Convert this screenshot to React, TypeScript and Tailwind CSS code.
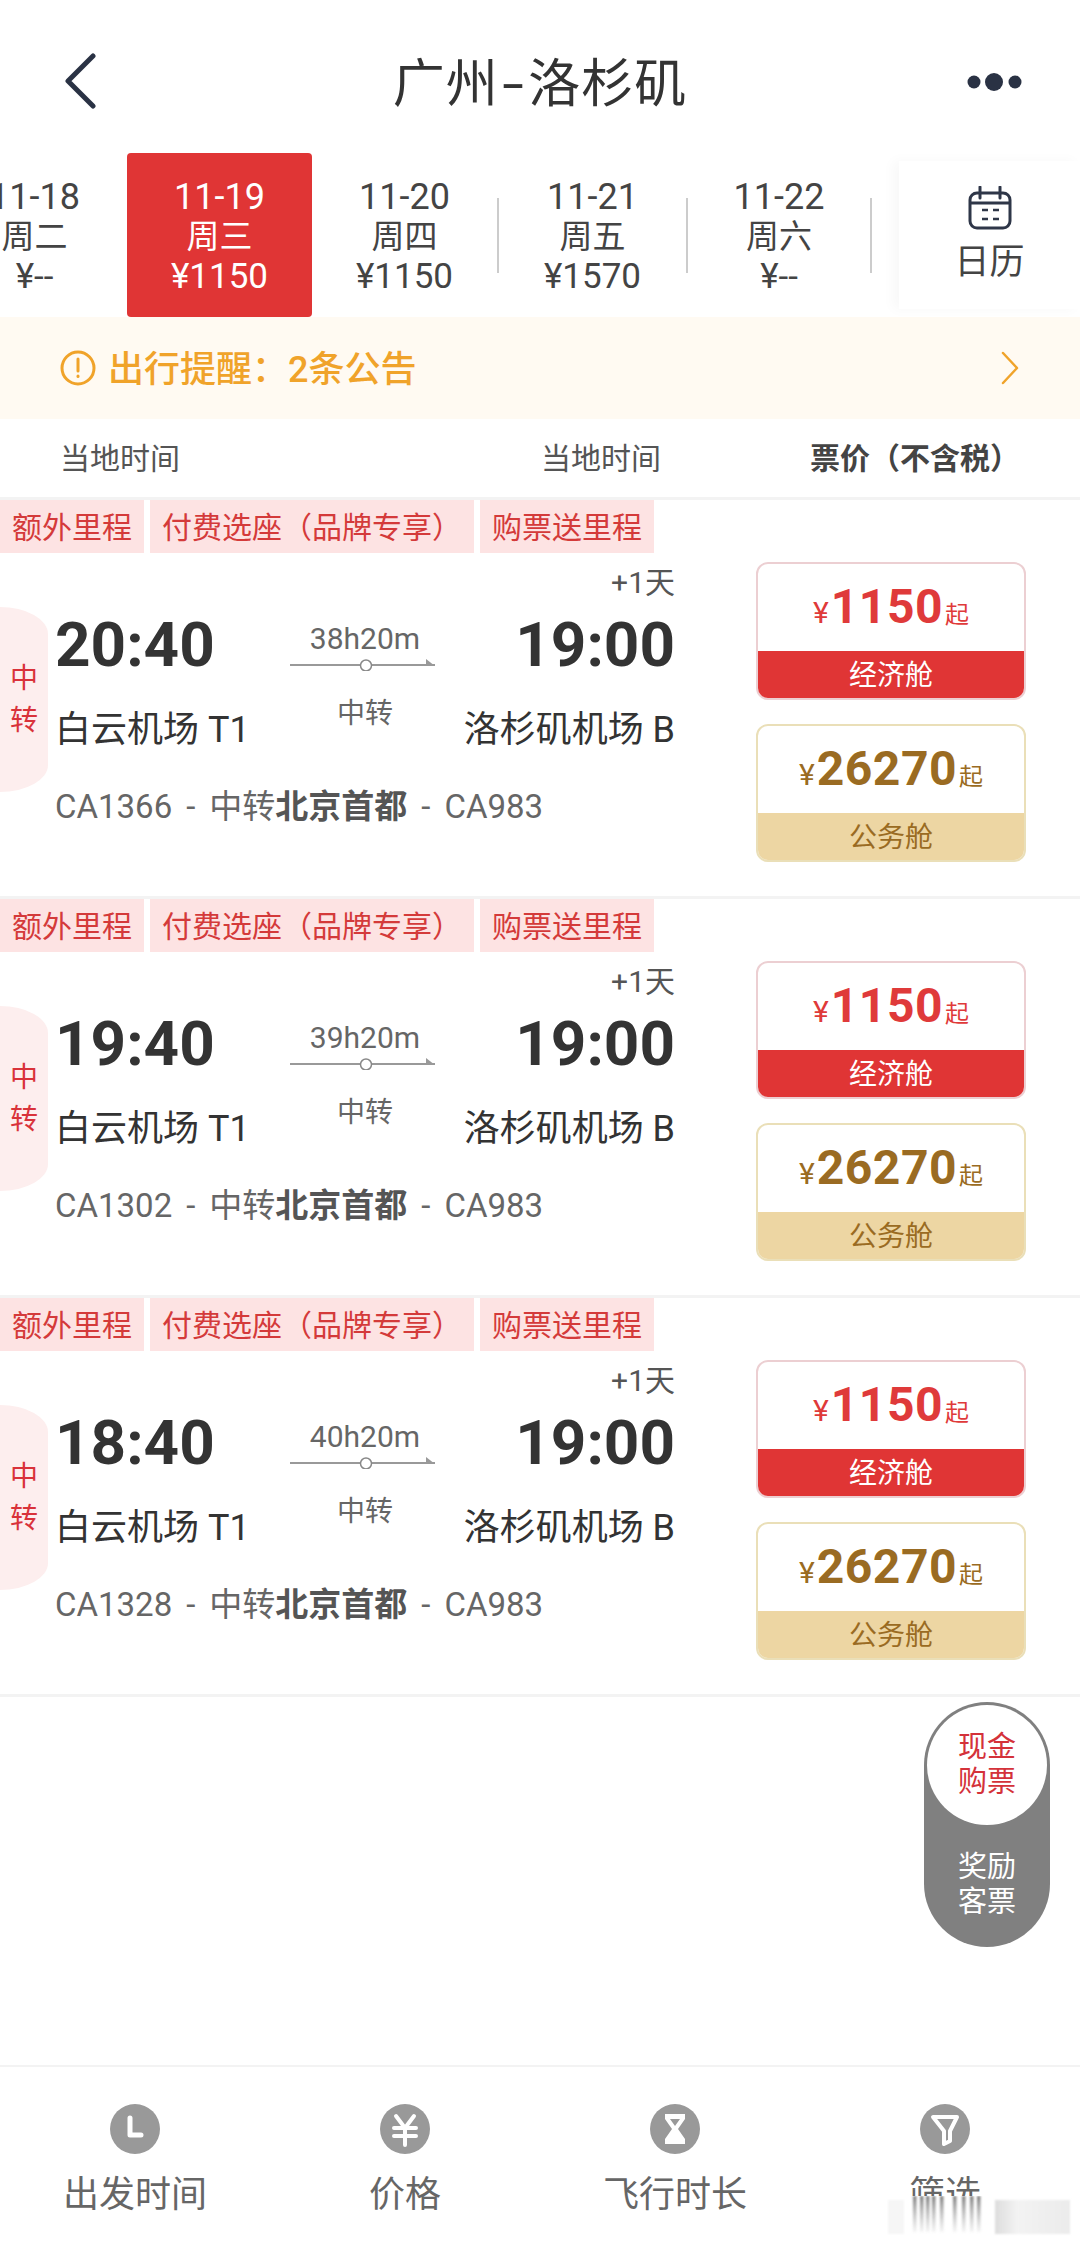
import React from "react";

const dates = [
  { d: "11-18", w: "周二", p: "¥--", cls: "w-[185px]" },
  { d: "11-19", w: "周三", p: "¥1150", cls: "w-[185px] bg-[#e03535] text-white rounded-[4px]" },
  { d: "11-20", w: "周四", p: "¥1150", cls: "w-[185px]", sep: true },
  { d: "11-21", w: "周五", p: "¥1570", cls: "w-[187px]", sep: true },
  { d: "11-22", w: "周六", p: "¥--", cls: "w-[182px]", sep: true },
];

const flights = [
  { dep: "20:40", dur: "38h20m", no: "CA1366" },
  { dep: "19:40", dur: "39h20m", no: "CA1302" },
  { dep: "18:40", dur: "40h20m", no: "CA1328" },
];

function Tag({ children, cls }: { children: React.ReactNode; cls: string }) {
  return (
    <div className={`h-[53px] bg-[#fde3e3] text-[#d43a3a] text-[30px] leading-[55px] whitespace-nowrap ${cls}`}>
      {children}
    </div>
  );
}

function PriceBox({ price, label, gold }: { price: string; label: string; gold?: boolean }) {
  const c = gold ? "text-[#9a6b22]" : "text-[#df3a3a]";
  return (
    <div className={`w-[270px] h-[138px] rounded-[12px] overflow-hidden border-2 flex flex-col ${gold ? "border-[#eadfb8]" : "border-[#eccfd2]"}`}>
      <div className={`flex-1 flex items-baseline justify-center pt-[16px] ${c}`}>
        <span className="text-[30px] leading-[54px] mr-[2px]">¥</span>
        <span className="text-[48px] leading-[54px] font-bold tracking-[0.5px]">{price}</span>
        <span className="text-[24px] leading-[54px] ml-[2px]">起</span>
      </div>
      <div className={`h-[49px] -mx-[2px] -mb-[2px] text-center text-[28px] leading-[49px] ${gold ? "bg-[#edd6a3] text-[#9a6b22]" : "bg-[#e03535] text-white"}`}>
        {label}
      </div>
    </div>
  );
}

function FlightCard({ dep, dur, no }: { dep: string; dur: string; no: string }) {
  return (
    <div className="h-[399px] border-b-[3px] border-[#f3f3f3]">
      <div className="flex gap-[6px]">
        <Tag cls="w-[144px] pl-[12px]">额外里程</Tag>
        <Tag cls="w-[324px] pl-[12px]">付费选座（品牌专享）</Tag>
        <Tag cls="w-[174px] pl-[12px]">购票送里程</Tag>
      </div>
      <div className="flex">
        <div className="w-[48px] h-[185px] mt-[54px] bg-[#fdeeee] rounded-tr-[48px_27px] rounded-br-[48px_27px] text-[#d9323a] text-[28px] leading-[42px] flex flex-col items-center justify-center">
          <span>中</span>
          <span>转</span>
        </div>
        <div className="w-[620px] ml-[7px] flex flex-col">
          <div className="mt-[15px] h-[30px] text-right text-[30px] leading-[30px] text-[#555]">+1天</div>
          <div className="flex text-[#333]">
            <div className="flex-1 basis-0 mt-[15px] flex flex-col items-start">
              <div className="h-[64px] text-[62px] leading-[64px] font-bold">{dep}</div>
              <div className="mt-[31px] h-[44px] text-[36px] leading-[44px] whitespace-nowrap">白云机场 T1</div>
            </div>
            <div className="w-[145px] flex flex-col items-center text-[#666]">
              <div className="h-[36px] mt-[23px] text-[30px] leading-[36px]">{dur}</div>
              <svg className="mt-[2px] mr-[6px] block" width="145" height="12" viewBox="0 0 145 12">
                <line x1="0" y1="6" x2="145" y2="6" stroke="#999" strokeWidth="2" />
                <path d="M136 0 L145 7 L136 7 Z" fill="#999" />
                <circle cx="76" cy="6.5" r="5.5" fill="#fff" stroke="#888" strokeWidth="1.5" />
              </svg>
              <div className="h-[36px] mt-[25px] text-[28px] leading-[36px]">中转</div>
            </div>
            <div className="flex-1 basis-0 mt-[15px] flex flex-col items-end">
              <div className="h-[64px] text-[62px] leading-[64px] font-bold">19:00</div>
              <div className="mt-[31px] h-[44px] text-[36px] leading-[44px] whitespace-nowrap">洛杉矶机场 B</div>
            </div>
          </div>
          <div className="mt-[35px] text-[33px] leading-[40px] text-[#666] whitespace-nowrap">
            <span>{no}</span>
            <span className="mx-[14px]">-</span>
            <span>中转</span>
            <span className="font-bold text-[#555]">北京首都</span>
            <span className="mx-[14px]">-</span>
            <span>CA983</span>
          </div>
        </div>
        <div className="ml-[81px] mt-[9px] flex flex-col gap-[24px]">
          <PriceBox price="1150" label="经济舱" />
          <PriceBox price="26270" label="公务舱" gold />
        </div>
      </div>
    </div>
  );
}

function BottomItem({ label, icon }: { label: string; icon: React.ReactNode }) {
  return (
    <div className="w-[270px] flex flex-col items-center">
      <svg width="50" height="50" viewBox="0 0 50 50" className="block mt-[37px]">
        <circle cx="25" cy="25" r="25" fill="#999" />
        {icon}
      </svg>
      <div className="mt-[19px] text-[36px] leading-[44px] text-[#666]">{label}</div>
    </div>
  );
}

export default function App() {
  return (
    <div className="relative w-[1080px] h-[2247px] bg-white overflow-hidden flex flex-col font-['Roboto','Noto_Sans_CJK_SC',sans-serif] text-[#333]">
      {/* header */}
      <div className="h-[153px] flex items-center justify-between pl-[62px] pr-[58px]">
        <svg width="36" height="56" viewBox="0 0 36 56" className="block mt-[8px] mr-[16px]">
          <path d="M31 3 L6 28 L31 53" fill="none" stroke="#2a3244" strokeWidth="5" strokeLinecap="round" strokeLinejoin="round" />
        </svg>
        <div className="text-[52px] leading-[60px] mt-[16px] text-[#333] tracking-[1px] whitespace-nowrap">
          广州<span className="inline-block mx-[7px] scale-x-[1.5]">-</span>洛杉矶
        </div>
        <svg width="56" height="24" viewBox="0 0 56 24" className="block mt-[10px]">
          <circle cx="8" cy="12" r="6.5" fill="#2a3244" />
          <circle cx="28" cy="12" r="9" fill="#2a3244" />
          <circle cx="49" cy="12" r="6.5" fill="#2a3244" />
        </svg>
      </div>

      {/* date strip */}
      <div className="relative h-[164px] flex overflow-hidden">
        <div className="flex items-center -ml-[58px]">
          {dates.map((x) => (
            <React.Fragment key={x.d}>
              <div className={`h-[164px] shrink-0 flex flex-col items-center pt-[25px] text-[33px] leading-[39px] text-[#444] ${x.cls}`}>
                <span className="text-[36px]">{x.d}</span>
                <span>{x.w}</span>
                <span className="text-[35px] mt-[1px]">{x.p}</span>
              </div>
              {x.sep && <div className="w-[2px] h-[75px] bg-[#ccc] shrink-0" />}
            </React.Fragment>
          ))}
        </div>
        <div className="absolute right-0 top-[8px] h-[148px] w-[181px] bg-white shadow-[-6px_0_12px_rgba(0,0,0,0.03)] flex flex-col items-center pt-[25px]">
          <svg width="44" height="44" viewBox="0 0 44 44" className="block" fill="none" stroke="#2e3648" strokeWidth="3">
            <rect x="2" y="7" width="40" height="35" rx="7" />
            <path d="M2 17 H42" />
            <path d="M12 1 V12 M32 1 V12" strokeLinecap="round" />
            <path d="M14 24 H20 M25 24 H31 M14 33 H20 M25 33 H31" strokeWidth="2.5" />
          </svg>
          <div className="mt-[11px] text-[35px] leading-[44px] text-[#444]">日历</div>
        </div>
      </div>

      {/* notice */}
      <div className="h-[102px] bg-[#fffaf2] flex items-center pl-[60px] pr-[60px] text-[#f0a32a] text-[36px]">
        <svg width="36" height="36" viewBox="0 0 36 36" className="block" fill="none" stroke="#f0a32a" strokeWidth="3">
          <circle cx="18" cy="18" r="16" />
          <path d="M18 9 V21" strokeLinecap="round" />
          <path d="M18 26 V26.5" strokeLinecap="round" />
        </svg>
        <span className="ml-[12px] mt-[3px] font-medium">出行提醒：2条公告</span>
        <svg width="20" height="34" viewBox="0 0 20 34" className="block ml-auto" fill="none" stroke="#f0a32a" strokeWidth="2.5">
          <path d="M3 2 L17 17 L3 32" strokeLinecap="round" strokeLinejoin="round" />
        </svg>
      </div>

      {/* sub header */}
      <div className="h-[81px] flex items-center border-b-[3px] border-[#f3f3f3] text-[#555] text-[30px] pt-[1px]">
        <span className="ml-[60px] w-[481px]">当地时间</span>
        <span className="w-[269px]">当地时间</span>
        <span className="text-[30px] font-bold text-[#444] whitespace-nowrap">票价（不含税）</span>
      </div>

      {flights.map((f) => (
        <FlightCard key={f.no} {...f} />
      ))}

      {/* middle spacer with floating toggle */}
      <div className="flex-1 relative">
        <div className="absolute right-[30px] top-[5px] w-[126px] h-[245px] rounded-full bg-[#808080] text-center text-[29px] leading-[35px]">
          <div className="w-[120px] h-[120px] rounded-full bg-white text-[#d4323a] flex flex-col items-center justify-center absolute left-[3px] top-[3px]">
            <span>现金</span>
            <span>购票</span>
          </div>
          <div className="absolute left-0 right-0 top-[148px] text-white flex flex-col items-center">
            <span>奖励</span>
            <span>客票</span>
          </div>
        </div>
      </div>

      {/* bottom bar */}
      <div className="h-[182px] border-t-[2px] border-[#f3f3f3] flex">
        <BottomItem
          label="出发时间"
          icon={<path d="M20 14 V31 H31" fill="none" stroke="#fff" strokeWidth="5" strokeLinecap="round" strokeLinejoin="round" />}
        />
        <BottomItem
          label="价格"
          icon={<path d="M16 12 L25 24 L34 12 M14 24 H36 M14 32 H36 M25 24 V41" fill="none" stroke="#fff" strokeWidth="4" strokeLinecap="round" strokeLinejoin="round" />}
        />
        <BottomItem
          label="飞行时长"
          icon={<path d="M15 10 H35 V15 L28 25 L35 35 V40 H15 V35 L22 25 L15 15 Z M20 15 H30 L25 22 Z" fill="#fff" fillRule="evenodd" />}
        />
        <BottomItem
          label="筛选"
          icon={<path d="M13 13 H37 L30 27 V37 L24 40 V27 Z" fill="none" stroke="#fff" strokeWidth="4" strokeLinejoin="round" />}
        />
      </div>

      {/* blurred watermark over the bottom right corner */}
      <svg className="absolute left-[880px] top-[2196px] block" width="200" height="46" viewBox="0 0 200 46">
        <defs>
          <linearGradient id="wmBar" x1="0" y1="0" x2="0" y2="1">
            <stop offset="0" stopColor="#666" stopOpacity="0.85" />
            <stop offset="1" stopColor="#999" stopOpacity="0.1" />
          </linearGradient>
          <linearGradient id="wmRight" x1="0" y1="0" x2="1" y2="0">
            <stop offset="0" stopColor="#ddd" />
            <stop offset="0.3" stopColor="#f3f3f3" />
            <stop offset="1" stopColor="#ebebeb" />
          </linearGradient>
          <filter id="wmBlur"><feGaussianBlur stdDeviation="1" /></filter>
        </defs>
        <rect x="0" y="0" width="200" height="46" fill="#fff" />
        <g filter="url(#wmBlur)">
          <rect x="8" y="4" width="16" height="34" fill="#f6f6f6" />
          {[33, 40, 46, 52, 60, 73, 82, 90, 97].map((x) => (
            <rect key={x} x={x} y="0" width="3.5" height="36" fill="url(#wmBar)" />
          ))}
          <rect x="115" y="4" width="75" height="34" fill="url(#wmRight)" />
        </g>
      </svg>
    </div>
  );
}
